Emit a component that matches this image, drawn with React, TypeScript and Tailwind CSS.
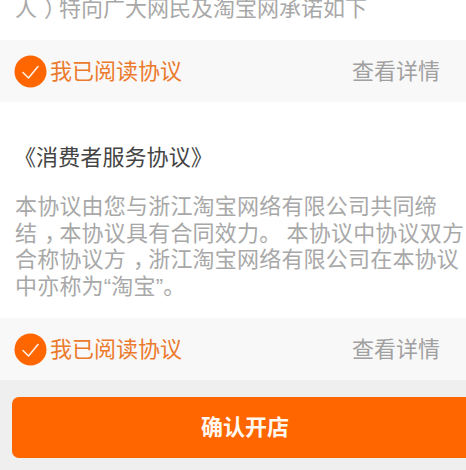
import React from 'react';

const cjk = { fontFamily: '"Noto Sans CJK SC", sans-serif' };

// full-width punctuation sits centred in its cell in the reference
const Punct: React.FC<{ children: React.ReactNode }> = ({ children }) => (
  <span className="relative left-[7px]">{children}</span>
);

const Quote: React.FC<{ children: React.ReactNode }> = ({ children }) => (
  <span className="font-['Liberation_Sans']">{children}</span>
);

const AgreeRow: React.FC = () => (
  <div className="flex h-[62px] items-center justify-between bg-[#f8f8f8] pl-[14px] pr-[26px]">
    <div className="flex items-center gap-[3px]">
      <svg width="33" height="33" viewBox="0 0 33 33">
        <circle cx="16.5" cy="16.5" r="16" fill="#ff6600" />
        <path d="M9 17.5l5.5 5.5L24 11.5" fill="none" stroke="#ffffff" strokeWidth="1.6" strokeLinecap="round" strokeLinejoin="round" opacity="0.9" />
      </svg>
      <span className="pb-[4px] text-[22px] leading-[27px] text-[#ec7a2c]">我已阅读协议</span>
    </div>
    <span className="pb-[4px] text-[22px] leading-[27px] text-[#a0a0a0]">查看详情</span>
  </div>
);

export default function App() {
  return (
    <div className="h-[470px] w-[466px] overflow-hidden bg-[#efefef]" style={cjk}>
      <div className="bg-white">
        <p className="-mt-[7px] h-[47px] whitespace-nowrap pl-[15px] text-[22px] leading-[27px] text-[#a8a8a8]">人<Punct>）</Punct>特向广大网民及淘宝网承诺如下</p>
        <AgreeRow />
        <h2 className="h-[89px] pl-[14px] pt-[40px] text-[22px] leading-[27px] font-normal tracking-[0.1px] text-[#444444]">《消费者服务协议》</h2>
        <p className="h-[127px] w-[466px] whitespace-nowrap pl-[15px] text-[22px] leading-[26.6px] tracking-[0.2px] text-[#a8a8a8]">
          本协议由您与浙江淘宝网络有限公司共同缔<br />
          结<Punct>，</Punct>本协议具有合同效力。 本协议中协议双方<br />
          合称协议方<Punct>，</Punct>浙江淘宝网络有限公司在本协议<br />
          中亦称为<Quote>“</Quote>淘宝<Quote>”</Quote>。
        </p>
        <AgreeRow />
      </div>
      <div className="pl-[12px] pt-[17px]">
        <button className="flex h-[61px] w-[466px] items-center justify-center rounded-[7px] bg-[#ff6600] pb-[4px] text-[22px] font-bold text-[#fff8f0]">确认开店</button>
      </div>
    </div>
  );
}
